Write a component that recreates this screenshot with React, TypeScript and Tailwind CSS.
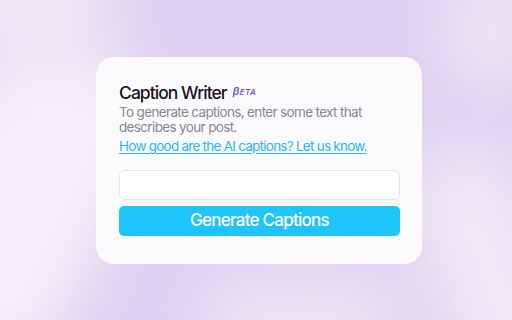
export default function App() {
  return (
    <div
      className="relative w-[512px] h-[320px] overflow-hidden bg-[#ddd1f1]"
      style={{ fontFamily: 'Inter, "Liberation Sans", sans-serif' }}
    >
      {/* soft blurry highlights in the backdrop */}
      <div className="absolute -left-[70px] top-[30px] w-[180px] h-[340px] rotate-[25deg] rounded-full bg-[#f4eff9] blur-[28px]" />
      <div className="absolute -left-[40px] -top-[60px] w-[150px] h-[130px] rounded-full bg-[#efe9f6] blur-[30px]" />
      <div className="absolute -right-[40px] top-[140px] w-[120px] h-[270px] -rotate-[20deg] rounded-full bg-[#efe9f7] blur-[30px]" />
      <div className="absolute -right-[30px] -top-[30px] w-[100px] h-[120px] rounded-full bg-[#ebe4f5] blur-[25px]" />
      <div className="absolute left-[200px] -bottom-[50px] w-[200px] h-[90px] rounded-full bg-[#ece6f5] blur-[30px]" />

      <div className="relative flex h-full items-start justify-center pt-[57px] pl-[6px]">
        <div className="flex flex-col w-[326px] h-[207px] rounded-[18px] bg-[#fbfbfe] px-[23px] pt-[25px]">
          <div className="flex items-center gap-[6px]">
            <h1 className="text-[17.5px] leading-[22px] font-medium text-[#1b1322] tracking-[-0.95px]">Caption Writer</h1>
            <span className="text-[11px] italic font-semibold text-[#7a55c6] tracking-[0.4px] -mt-[3px]">
              β<span className="text-[8px]">ETA</span>
            </span>
          </div>
          <p className="mt-[1px] text-[13.5px] leading-[15px] text-[#8a8692] tracking-[-0.65px]">
            To generate captions, enter some text that describes your post.
          </p>
          <a
            href="#"
            className="mt-[3px] text-[13.5px] leading-[16px] text-[#2ab6ea] underline underline-offset-2 tracking-[-0.75px]"
          >
            How good are the AI captions? Let us know.
          </a>
          <div className="flex flex-col gap-[6px] mt-[16px] w-[281px]">
            <input className="h-[30px] rounded-[6px] border border-[#e7e2f2] bg-white outline-none" />
            <button className="h-[30px] rounded-[5px] bg-[#1ec5fa] text-white text-[17px] font-medium tracking-[-0.75px]">
              Generate Captions
            </button>
          </div>
        </div>
      </div>
    </div>
  );
}
